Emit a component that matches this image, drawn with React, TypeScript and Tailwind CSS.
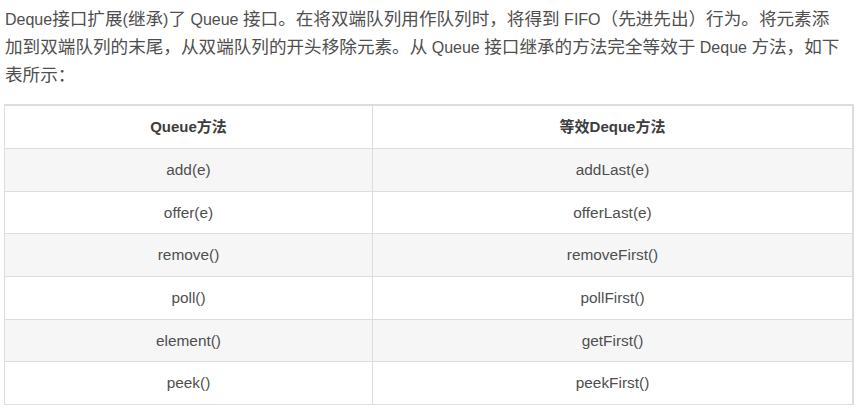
import * as React from "react";

interface MethodRow {
  queue: string;
  deque: string;
}

const rows: MethodRow[] = [
  { queue: "add(e)", deque: "addLast(e)" },
  { queue: "offer(e)", deque: "offerLast(e)" },
  { queue: "remove()", deque: "removeFirst()" },
  { queue: "poll()", deque: "pollFirst()" },
  { queue: "element()", deque: "getFirst()" },
  { queue: "peek()", deque: "peekFirst()" },
];

const lines = [
  "Deque接口扩展(继承)了 Queue 接口。在将双端队列用作队列时，将得到 FIFO（先进先出）行为。将元素添",
  "加到双端队列的末尾，从双端队列的开头移除元素。从 Queue 接口继承的方法完全等效于 Deque 方法，如下",
  "表所示：",
];

// CJK glyphs in the source render a bit wider than the Latin text around them
function MixedText({ text }: { text: string }) {
  const parts = text.split(/([\u3000-\u9fff\uff00-\uffef]+)/);
  return (
    <>
      {parts.map((part, i) =>
        i % 2 === 1 ? (
          <span key={i} className="text-[17.6px]">
            {part}
          </span>
        ) : (
          <React.Fragment key={i}>{part}</React.Fragment>
        )
      )}
    </>
  );
}

export default function App() {
  return (
    <div className="min-h-screen bg-white font-['Liberation_Sans','Noto_Sans_CJK_SC',sans-serif] text-[#4f4f4f]">
      <div className="w-[850px] ml-[4px] pt-[5px]">
        {/* Intro paragraph */}
        <div className="text-[16px] leading-[28px] pl-[1px]">
          {lines.map((line, idx) => (
            <div key={idx} className="whitespace-nowrap h-[28px]">
              <MixedText text={line} />
            </div>
          ))}
        </div>

        {/* Method table */}
        <table className="mt-[15px] w-[850px] table-fixed border-separate border-spacing-0 border-l border-t-2 border-r-2 border-[#dddddd] text-[15.4px]">
          <colgroup>
            <col className="w-[368px]" />
            <col />
          </colgroup>
          <thead>
            <tr>
              <th className="h-[43px] border-b border-r border-[#dddddd] text-center font-bold text-[15px] text-[#3d3d3d] leading-[20px] p-0">
                Queue方法
              </th>
              <th className="h-[43px] border-b border-[#dddddd] text-center font-bold text-[15px] text-[#3d3d3d] leading-[20px] p-0">
                等效Deque方法
              </th>
            </tr>
          </thead>
          <tbody>
            {rows.map((row, idx) => (
              <tr key={idx} className={idx % 2 === 0 ? "bg-[#f6f6f6]" : "bg-white"}>
                <td className="h-[42.7px] border-b border-r border-[#dddddd] text-center leading-[20px] p-0">
                  {row.queue}
                </td>
                <td className="h-[42.7px] border-b border-[#dddddd] text-center leading-[20px] p-0">
                  {row.deque}
                </td>
              </tr>
            ))}
          </tbody>
        </table>
      </div>
    </div>
  );
}
